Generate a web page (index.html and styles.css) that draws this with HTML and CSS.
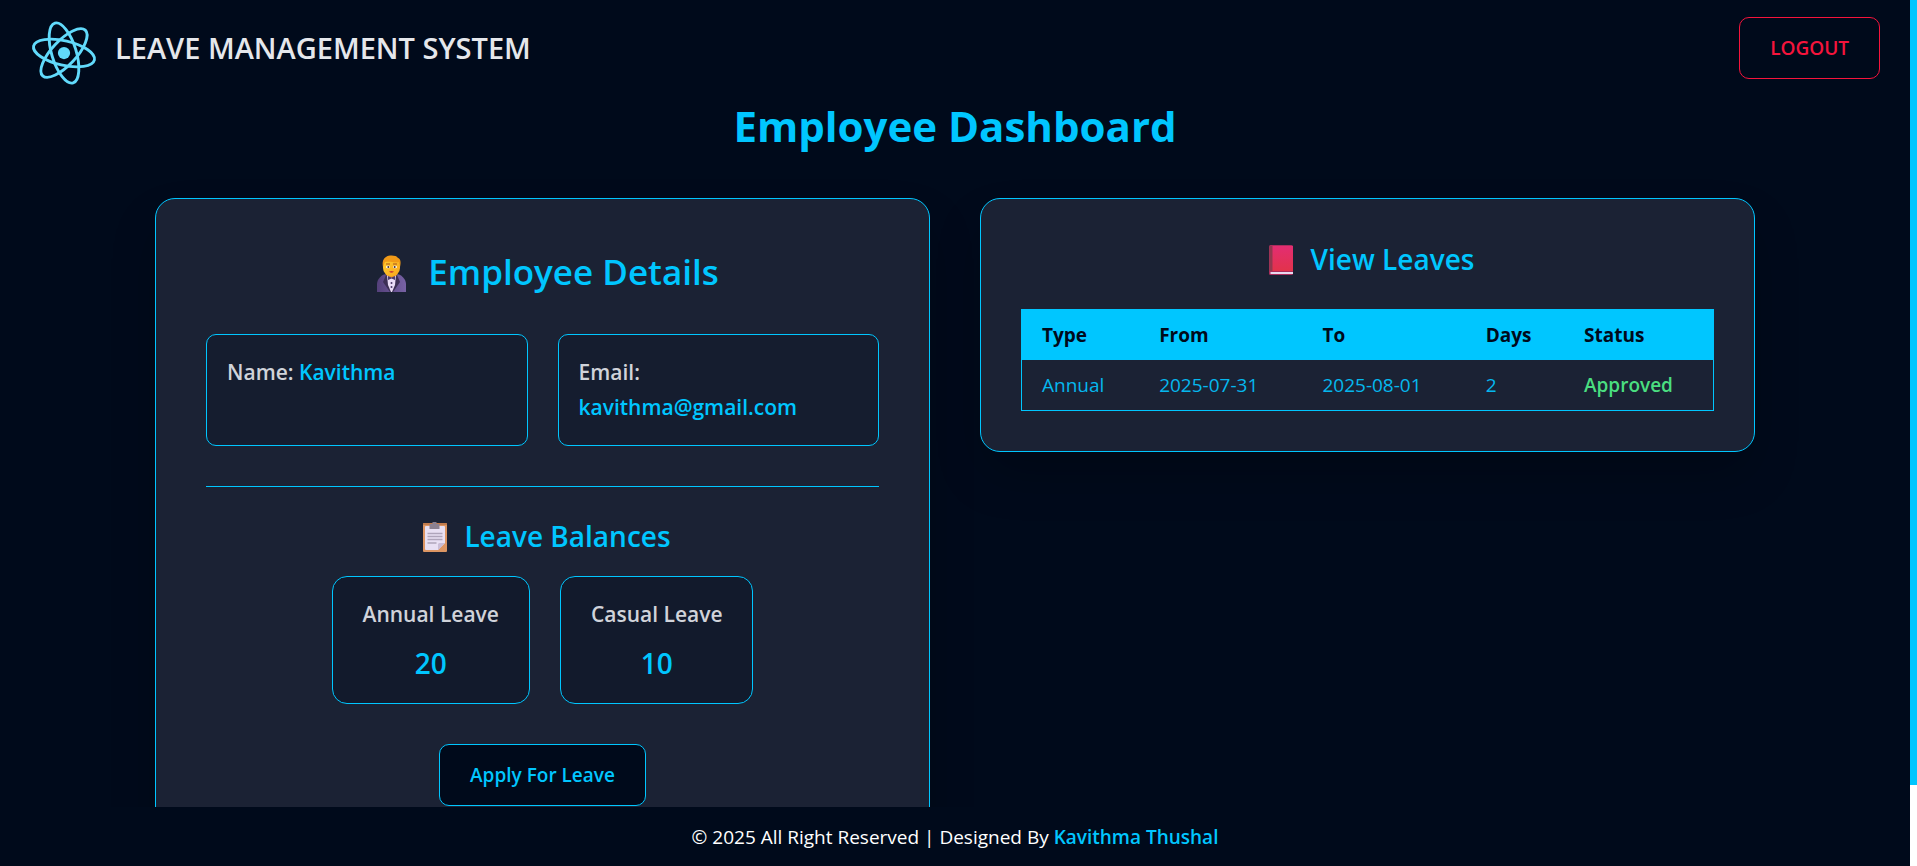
FILE: index.html
```html
<!DOCTYPE html>
<html lang="en">
<head>
<meta charset="utf-8">
<title>Leave Management System</title>
<link rel="stylesheet" href="styles.css">
</head>
<body>
<div class="shell">
  <div class="app">
    <header class="header">
      <div class="brand">
        <svg class="logo" viewBox="-12 -12 24 24" aria-hidden="true">
          <circle r="2.1" fill="#61dafb"/>
          <g fill="none" stroke="#61dafb" stroke-width="1" transform="rotate(13)">
            <ellipse rx="10.700" ry="4.200"/>
            <ellipse rx="10.700" ry="4.200" transform="rotate(60)"/>
            <ellipse rx="10.700" ry="4.200" transform="rotate(120)"/>
          </g>
        </svg>
        <span class="brand-name">LEAVE MANAGEMENT SYSTEM</span>
      </div>
      <button class="btn btn-logout" type="button">LOGOUT</button>
    </header>

    <main class="main">
      <h1 class="page-title">Employee Dashboard</h1>
      <div class="columns">
        <section class="card card-details">
          <h2 class="details-title">
            <svg class="icon-lg" viewBox="0 0 51 45" aria-hidden="true">
              <defs>
                <linearGradient id="suit" x1="0" x2="1" y1="0" y2="0"><stop offset="0" stop-color="#54407a"/><stop offset="1" stop-color="#7862a4"/></linearGradient>
                <linearGradient id="face" x1="0" x2="1" y1="0" y2="1"><stop offset="0" stop-color="#ffd030"/><stop offset="1" stop-color="#f8a51e"/></linearGradient>
              </defs>
              <path d="M11 43V35c0-5 5-10 10-10h9c5 0 10 5 10 10v8z" fill="url(#suit)"/>
              <path d="M20 26l-3 7 7 10h3l7-10-3-7z" fill="#3c2f55"/>
              <path d="M21 26h9l-1 10-3 7h-1l-3-7z" fill="#eadcf7"/>
              <path d="M20 23h11v3l-5 3-6-3z" fill="#ef9a20"/>
              <rect x="17" y="7" width="17" height="20" rx="8" fill="url(#face)"/>
              <path d="M17 18c-1-5 0-8 3-10 3-2 10-2 12 1 3 1 3 5 2 9l-1-5c-4 1-9-1-14 0z" fill="#f19a18"/>
              <path d="M20 15h4M27 15h4" stroke="#a8541c" stroke-width="1"/>
              <ellipse cx="22" cy="18" rx="2" ry="1.2" fill="#fff"/><ellipse cx="29" cy="18" rx="2" ry="1.2" fill="#fff"/>
              <circle cx="22.3" cy="18" r="1" fill="#43303a"/><circle cx="28.7" cy="18" r="1" fill="#43303a"/>
              <path d="M23 22.500q2.500-1 5 0-2.500 2.500-5 0z" fill="#c73a34"/>
              <path d="M22 27l3.500 1.500L29 27v4l-3.500-1.500L22 31z" fill="#4b3968"/>
              <circle cx="25.500" cy="34" r="1" fill="#4b3968"/><circle cx="25.500" cy="38" r="1" fill="#4b3968"/>
            </svg>
            Employee Details
          </h2>
          <div class="fields">
            <p class="field">Name: <span class="accent">Kavithma</span></p>
            <p class="field">Email: <span class="accent">kavithma@gmail.com</span></p>
          </div>
          <hr class="divider">
          <h3 class="section-title balances-title">
            <svg class="icon-md" viewBox="0 0 41 40" aria-hidden="true">
              <rect x="9" y="7" width="24" height="29" rx="1" fill="#dd9663"/>
              <path d="M9 8h24" stroke="#b87345" stroke-width="1.500"/>
              <path d="M12 10h18a1 1 0 0 1 1 1v16l-7 7H12a1 1 0 0 1-1-1V11a1 1 0 0 1 1-1z" fill="#e8e0f3"/>
              <path d="M24 34v-6l1-1h6z" fill="#c9bdd6"/>
              <path d="M15.500 8h3V6h4v2h3v5h-10z" fill="#8b8090"/>
              <path d="M13.500 17.500h15M13.500 20.500h15M13.500 23.500h15M13.500 27h9" stroke="#afa5bb" stroke-width="1.400"/>
            </svg>
            Leave Balances
          </h3>
          <div class="balances">
            <div class="balance">
              <span class="balance-label">Annual Leave</span>
              <span class="balance-value">20</span>
            </div>
            <div class="balance">
              <span class="balance-label">Casual Leave</span>
              <span class="balance-value">10</span>
            </div>
          </div>
          <button class="btn btn-apply" type="button">Apply For Leave</button>
        </section>

        <section class="card card-leaves">
          <h3 class="section-title leaves-title">
            <svg class="icon-md" viewBox="0 0 41 40" aria-hidden="true">
              <defs><linearGradient id="cover" x1="0" x2="0" y1="0" y2="1"><stop offset="0" stop-color="#e32d72"/><stop offset="1" stop-color="#e2334b"/></linearGradient></defs>
              <rect x="8" y="6" width="24" height="30" rx="1.500" fill="#a92e5c"/>
              <rect x="11" y="7" width="21" height="25" fill="url(#cover)"/>
              <rect x="8.500" y="7" width="3" height="25" fill="#91384f"/>
              <rect x="9.500" y="33" width="22.500" height="2" fill="#e8d9ef"/>
            </svg>
            View Leaves
          </h3>
          <table class="leaves">
            <colgroup><col class="c-type"><col class="c-date"><col class="c-date"><col class="c-days"><col></colgroup>
            <thead>
              <tr><th scope="col">Type</th><th scope="col">From</th><th scope="col">To</th><th scope="col">Days</th><th scope="col">Status</th></tr>
            </thead>
            <tbody>
              <tr><td>Annual</td><td>2025-07-31</td><td>2025-08-01</td><td>2</td><td class="approved">Approved</td></tr>
            </tbody>
          </table>
        </section>
      </div>
    </main>

    <footer class="footer">© 2025 All Right Reserved | Designed By <a class="author" href="#">Kavithma Thushal</a></footer>
  </div>
  <div class="scroll-track" aria-hidden="true"><div class="scroll-thumb"></div></div>
</div>
</body>
</html>
```

FILE: styles.css
```css
:root {
  --bg: #000a1b;
  --card: #1b2234;
  --cyan: #00c6ff;
  --muted: #d0d3da;
}

* { box-sizing: border-box; }

body {
  margin: 0;
  background: var(--bg);
  color: #fff;
  font-family: "Segoe UI", "Open Sans", "Noto Sans", sans-serif;
  font-size: 19px;
  line-height: 30px;
}

h1, h2, h3, p { margin: 0; }

.shell { display: flex; height: 100vh; }
.app { flex: 1; min-width: 0; display: flex; flex-direction: column; }

.scroll-track { width: 7px; padding-bottom: 81px; background: #fff; }
.scroll-thumb { height: 100%; background: var(--cyan); }

.header {
  display: flex;
  align-items: center;
  justify-content: space-between;
  padding: 8px 30px 8px 29px;
}
.brand { display: flex; align-items: center; gap: 16px; }
.logo { width: 70px; height: 70px; margin-top: 10px; }
.brand-name { font-size: 29px; line-height: 40px; font-weight: 600; color: #e5e7eb; }

.btn {
  height: 62px;
  padding: 0 30px;
  border: 1px solid var(--cyan);
  border-radius: 10px;
  background: var(--bg);
  color: var(--cyan);
  font: inherit;
  font-weight: 600;
  cursor: pointer;
}
.btn-logout { border-color: #f5143c; color: #f5143c; }

.main { flex: 1; min-height: 0; overflow: hidden; }
.page-title {
  margin-bottom: 42px;
  text-align: center;
  font-size: 42px;
  line-height: 60px;
  font-weight: 700;
  color: var(--cyan);
}

.columns {
  display: grid;
  grid-template-columns: 1fr 1fr;
  align-items: start;
  gap: 50px;
  max-width: 1600px;
  margin: 0 auto;
}
.card {
  border: 1px solid var(--cyan);
  border-radius: 20px;
  background: var(--card);
  box-shadow: 0 25px 50px -8px rgba(0, 0, 0, 0.25);
}
.card-details { padding: 50px; display: flex; flex-direction: column; }
.card-leaves { padding: 40px; }

.details-title, .section-title {
  display: flex;
  justify-content: center;
  align-items: center;
  font-weight: 600;
  color: var(--cyan);
}
.details-title { gap: 11px; margin-bottom: 40px; font-size: 35px; line-height: 45px; }
.section-title { gap: 9px; font-size: 28px; line-height: 40px; }
.balances-title { margin-bottom: 20px; }
.leaves-title { margin-bottom: 30px; }
.icon-lg { width: 51px; height: 45px; }
.icon-md { width: 41px; height: 40px; }

.fields { display: grid; grid-template-columns: 1fr 1fr; gap: 30px; }
.field {
  padding: 20px;
  border: 1px solid var(--cyan);
  border-radius: 10px;
  background: #151d2f;
  font-size: 21px;
  line-height: 35px;
  font-weight: 600;
  color: var(--muted);
}
.accent { color: var(--cyan); }

.divider { width: 100%; height: 1px; margin: 40px 0 29px; border: 0; background: var(--cyan); }

.balances { display: flex; justify-content: center; gap: 30px; margin-bottom: 40px; }
.balance {
  display: flex;
  flex-direction: column;
  align-items: center;
  gap: 11px;
  padding: 20px 30px;
  border: 1px solid var(--cyan);
  border-radius: 15px;
  background: #121a2c;
  font-weight: 600;
}
.balance-label { font-size: 21px; line-height: 35px; color: var(--muted); }
.balance-value { font-size: 28px; line-height: 40px; color: var(--cyan); }
.btn-apply { align-self: center; }

.leaves {
  width: 100%;
  table-layout: fixed;
  border-collapse: collapse;
  border: 1px solid var(--cyan);
  text-align: left;
}
.c-type { width: 17%; }
.c-date { width: 23.6%; }
.c-days { width: 14.2%; }
.leaves th, .leaves td { padding: 10px 20px; line-height: 30px; }
.leaves th { background: var(--cyan); color: var(--bg); font-weight: 700; }
.leaves td { color: #05b8ee; }
.leaves td.approved { color: #4ade80; font-weight: 600; }

.footer { padding: 15px 0 14px; text-align: center; background: var(--bg); }
.author { color: var(--cyan); font-weight: 600; text-decoration: none; }
```
